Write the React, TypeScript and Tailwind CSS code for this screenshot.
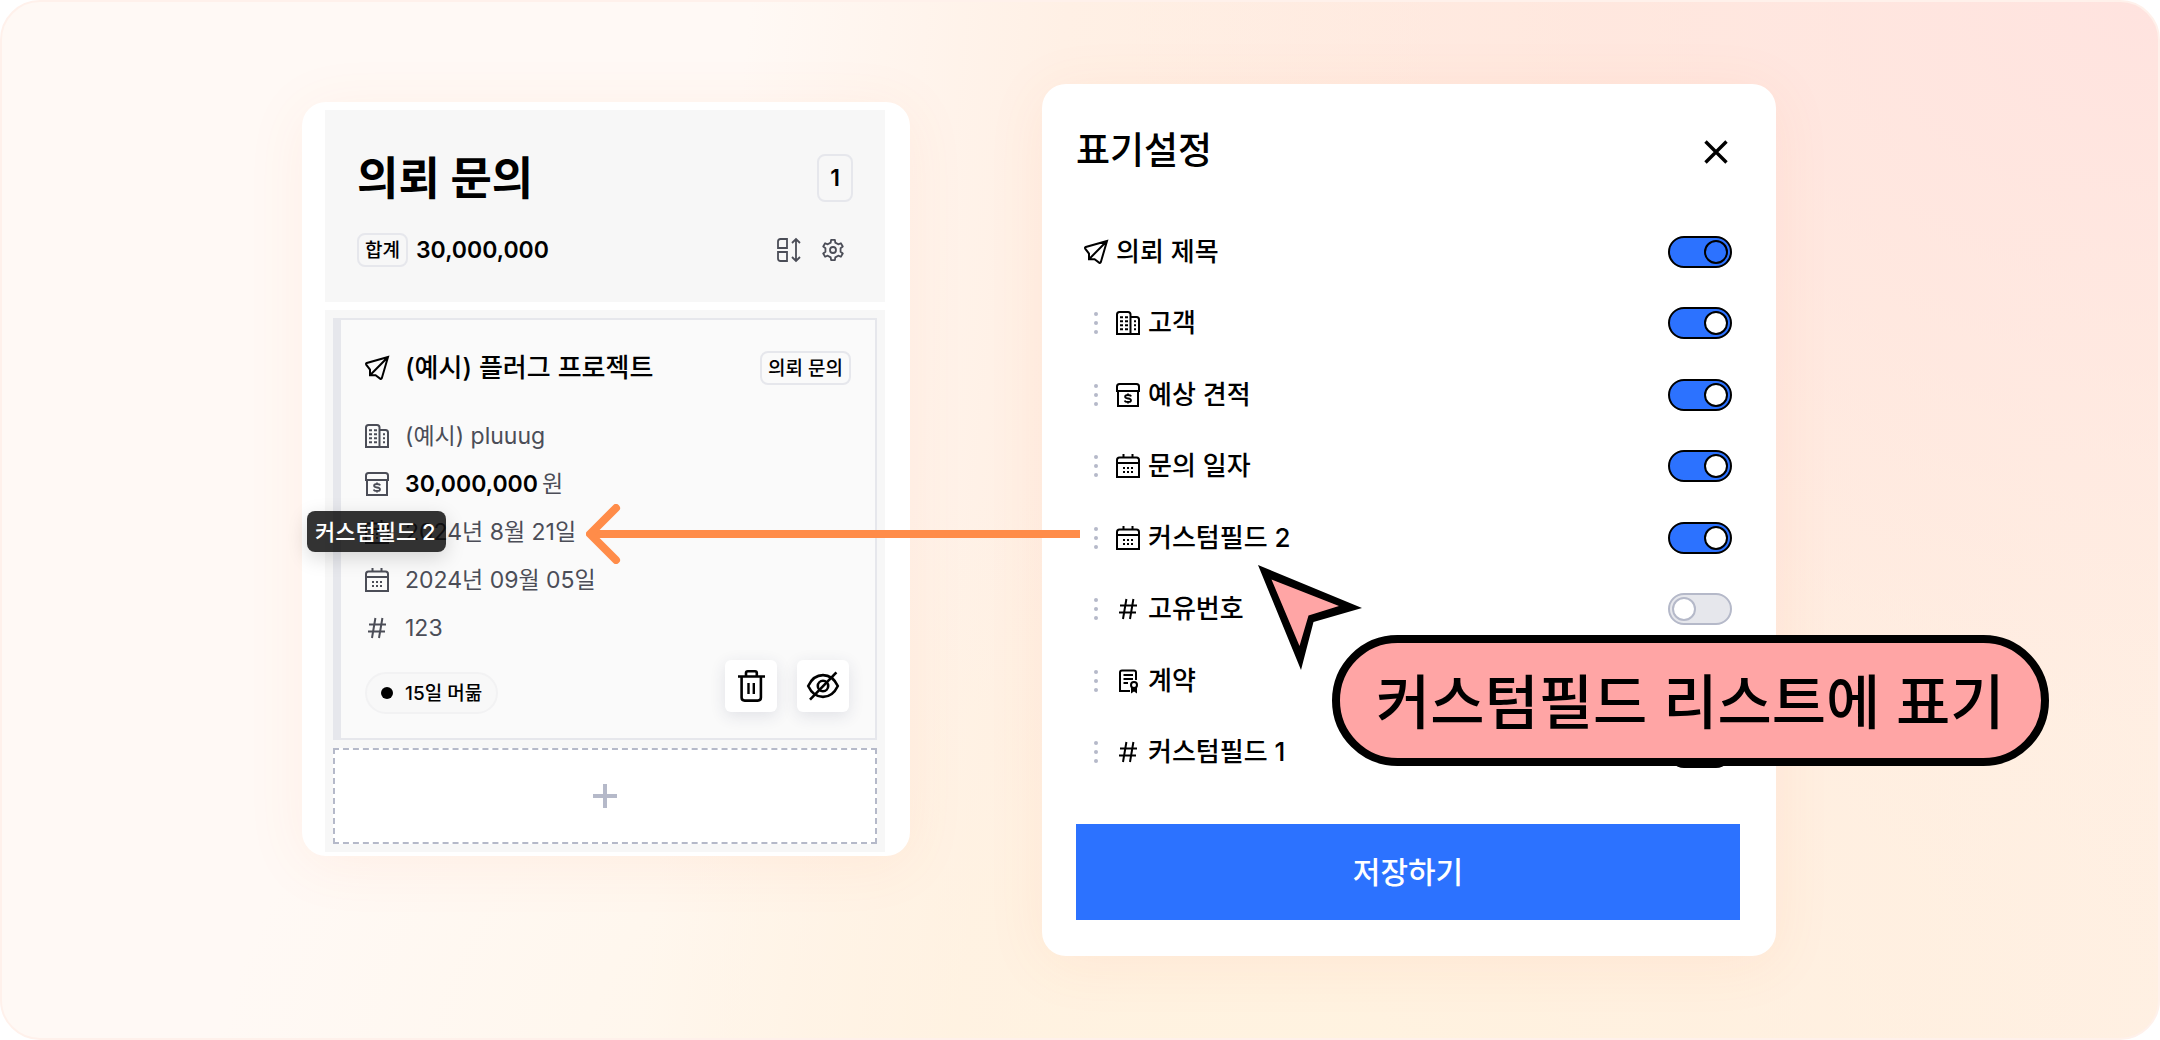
import type { ReactNode } from 'react';

type IconProps = { className?: string };

function Icon({ children, size = 24, className = 'size-6' }: { children: ReactNode; size?: number; className?: string }) {
  return (
    <svg
      aria-hidden="true"
      viewBox={`0 0 ${size} ${size}`}
      fill="none"
      stroke="currentColor"
      strokeWidth="2"
      className={`${className} shrink-0 overflow-visible`}
    >
      {children}
    </svg>
  );
}

function PlaneIcon({ className }: IconProps) {
  return (
    <Icon className={className}>
      <path d="M23 1 1.8 7Q.6 7.5 1.2 8.6L5 13.6V19.2H10.6L15.4 22.8Q16.3 23.3 16.8 22.2Z M23 1 5 19.2" />
    </Icon>
  );
}

function BuildingIcon({ className }: IconProps) {
  return (
    <Icon className={className}>
      <path d="M1 23V3.5Q1 1 3.5 1H12Q14.5 1 14.5 3.5V23M14.5 6H20.5Q23 6 23 8.5V23M0 23H24" />
      <path d="M4 6.2h3M9 6.2h3M4 10.2h3M9 10.2h3M4 14.2h3M9 14.2h3M4 18.2h3M9 18.2h3M18 10.2h2M18 14.2h2M18 18.2h2" />
    </Icon>
  );
}

function BudgetIcon({ className }: IconProps) {
  return (
    <Icon className={className}>
      <path d="M1 8V3.5Q1 1 3.5 1H20.5Q23 1 23 3.5V8ZM2 8V23H22V8" />
      <path
        d="M15.2 13.4Q14.6 12 12 12 9.1 12 9.1 13.8 9.1 15.2 12 15.5 15 15.8 15 17.4 15 19 12 19 9.2 19 8.7 17.4M12 10.4V12M12 19V20.6"
        strokeWidth="1.8"
      />
    </Icon>
  );
}

function CalendarIcon({ className }: IconProps) {
  return (
    <Icon className={className}>
      <path d="M1 23V6Q1 3.5 3.5 3.5H20.5Q23 3.5 23 6V23ZM1 9H23M7.5 0V4M16.5 0V4" />
      <path d="M7 14h2M11 14h2M15 14h2M7 18h2M11 18h2M15 18h2" />
    </Icon>
  );
}

function HashIcon({ className }: IconProps) {
  return (
    <Icon className={className}>
      <path d="M4 8.5H21M3 15.5H20M10.4 2 7 22M17.4 2 14 22" />
    </Icon>
  );
}

function ContractIcon({ className }: IconProps) {
  return (
    <Icon className={className}>
      <path d="M14 22H4V3.5Q4 1.5 6 1.5H18Q20 1.5 20 3.5V11M7.5 6H17M7.5 10H17M7.5 14H12" />
      <circle cx="18" cy="16" r="3" />
      <path d="M15 18.5H21V24.5L18 22.5 15 24.5Z" fill="currentColor" stroke="none" />
    </Icon>
  );
}

function SortIcon() {
  return (
    <Icon>
      <path d="M1 10V3.5Q1 1 3.5 1H10V10ZM1 14H10V23H3.5Q1 23 1 20.5Z" strokeWidth="1.8" />
      <path d="M19 1V23M15 5 19 1 23 5M15 19 19 23 23 19" strokeWidth="1.8" />
    </Icon>
  );
}

const gearPath =
  [0, 60, 120, 180, 240, 300]
    .map((deg, index) => {
      const turn = (deg * Math.PI) / 180;
      const corners = [
        [-2.3, -7.4],
        [-1.9, -10.2],
        [1.9, -10.2],
        [2.3, -7.4],
      ];
      return corners
        .map(([x, y], corner) => {
          const px = 12 + x * Math.cos(turn) - y * Math.sin(turn);
          const py = 12 + x * Math.sin(turn) + y * Math.cos(turn);
          return `${index + corner === 0 ? 'M' : 'L'}${px.toFixed(2)} ${py.toFixed(2)}`;
        })
        .join('');
    })
    .join('') + 'Z';

function GearIcon() {
  return (
    <Icon>
      <path d={gearPath} strokeWidth="1.8" strokeLinejoin="round" />
      <circle cx="12" cy="12" r="3" strokeWidth="1.8" />
    </Icon>
  );
}

function TrashIcon() {
  return (
    <Icon size={32} className="size-8">
      <path d="M3 6.5H30M11 6.5V3Q11 1.2 12.8 1.2H20Q21.8 1.2 21.8 3V6.5M6.6 6.5V27.5Q6.6 30.6 9.7 30.6H22.8Q25.9 30.6 25.9 27.5V6.5" strokeWidth="2.6" />
      <path d="M13.5 13V24M18.8 13V24" strokeWidth="2.4" />
    </Icon>
  );
}

function HiddenIcon() {
  return (
    <Icon size={32} className="size-8">
      <path d="M1.2 16C8 1.5 24 1.5 30.8 16 24 30.5 8 30.5 1.2 16Z" strokeWidth="2.6" />
      <circle cx="16" cy="16" r="5.2" strokeWidth="2.6" />
      <path d="M3 29.6 29.4 2.4" strokeWidth="2.6" />
    </Icon>
  );
}

function Badge({ children }: { children: ReactNode }) {
  return (
    <span className="flex h-[34px] items-center rounded-lg border-2 border-[#e6e7ec] px-1.5 text-[19px] leading-none font-medium text-black">
      {children}
    </span>
  );
}

function CardRow({ icon, children }: { icon: ReactNode; children: ReactNode }) {
  return (
    <li className="relative flex h-12 items-center gap-4 text-[23px] leading-8 font-normal text-[#4b4d57]">
      {icon}
      {children}
    </li>
  );
}

function BoardColumn() {
  return (
    <section className="mt-[18px] rounded-[24px] bg-white pt-2 pr-[25px] pb-1 pl-[23px] shadow-[0_8px_60px_rgba(255,110,70,0.08)]">
      <header className="bg-[#f7f7f7] px-8 pt-11 pb-[35px]">
        <div className="flex h-12 items-center justify-between">
          <h1 className="text-[45px] leading-none font-bold">의뢰 문의</h1>
          <span className="flex h-12 w-9 items-center justify-center rounded-lg border-2 border-[#e6e7ec] text-[23px] font-semibold">1</span>
        </div>
        <div className="mt-[31px] flex items-center">
          <Badge>합계</Badge>
          <strong className="ml-2 text-[23px] leading-8 font-semibold">30,000,000</strong>
          <div className="ml-auto flex gap-5 pr-2 text-[#4b4d57]">
            <button type="button" aria-label="정렬">
              <SortIcon />
            </button>
            <button type="button" aria-label="설정">
              <GearIcon />
            </button>
          </div>
        </div>
      </header>

      <div className="mt-2 bg-[#f7f7f7] p-2">
        <article className="border-2 border-l-8 border-[#e6e7ec] bg-[#fafafa] px-6 pt-[31px] pb-6">
          <div className="flex h-[34px] items-center">
            <PlaneIcon />
            <h2 className="ml-4 text-[26px] leading-8 font-medium">(예시) 플러그 프로젝트</h2>
            <div className="ml-auto">
              <Badge>의뢰 문의</Badge>
            </div>
          </div>
          <ul className="mt-[27px]">
            <CardRow icon={<BuildingIcon />}>(예시) pluuug</CardRow>
            <CardRow icon={<BudgetIcon />}>
              <span>
                <strong className="mr-1 font-semibold text-black">30,000,000</strong>원
              </span>
            </CardRow>
            <CardRow icon={<CalendarIcon />}>
              2024년 8월 21일
              <span
                role="tooltip"
                className="absolute top-[3px] -left-[58px] flex h-[41px] items-center rounded-lg bg-black/80 pr-2.5 pl-2 text-[22px] leading-none font-medium whitespace-nowrap text-white shadow-[0_6px_20px_rgba(0,0,0,0.15)]"
              >
                커스텀필드 2
              </span>
            </CardRow>
            <CardRow icon={<CalendarIcon />}>2024년 09월 05일</CardRow>
            <CardRow icon={<HashIcon />}>123</CardRow>
          </ul>
          <div className="mt-2 flex items-end justify-between">
            <span className="flex h-[42px] items-center gap-3 rounded-full border-2 border-[#f2f2f3] bg-[#f8f8f8] px-3.5 text-[19px] leading-none font-medium">
              <span className="size-3 rounded-full bg-black" />
              15일 머묾
            </span>
            <div className="mr-0.5 mb-0.5 flex gap-5">
              <button
                type="button"
                aria-label="삭제"
                className="flex size-[52px] items-center justify-center rounded-md bg-white shadow-[0_4px_16px_rgba(40,50,90,0.12)]"
              >
                <TrashIcon />
              </button>
              <button
                type="button"
                aria-label="숨기기"
                className="flex size-[52px] items-center justify-center rounded-md bg-white shadow-[0_4px_16px_rgba(40,50,90,0.12)]"
              >
                <HiddenIcon />
              </button>
            </div>
          </div>
        </article>
        <button
          type="button"
          aria-label="추가"
          className="mt-2 flex h-24 w-full items-center justify-center border-2 border-dashed border-[#b5b9c9] bg-white text-[#b5b9c9]"
        >
          <Icon>
            <path d="M12 0V24M0 12H24" strokeWidth="4" />
          </Icon>
        </button>
      </div>
    </section>
  );
}

type Field = { id: string; label: string; icon: ReactNode; on: boolean; locked?: boolean };

const fields: Field[] = [
  { id: 'title', label: '의뢰 제목', icon: <PlaneIcon />, on: true, locked: true },
  { id: 'client', label: '고객', icon: <BuildingIcon />, on: true },
  { id: 'estimate', label: '예상 견적', icon: <BudgetIcon />, on: true },
  { id: 'inquiry-date', label: '문의 일자', icon: <CalendarIcon />, on: true },
  { id: 'custom-2', label: '커스텀필드 2', icon: <CalendarIcon />, on: true },
  { id: 'number', label: '고유번호', icon: <HashIcon />, on: false },
  { id: 'contract', label: '계약', icon: <ContractIcon />, on: true },
  { id: 'custom-1', label: '커스텀필드 1', icon: <HashIcon />, on: true },
];

function FieldRow({ field }: { field: Field }) {
  return (
    <li className="flex items-center pr-2 pl-2">
      {!field.locked && (
        <span className="mr-[18px] ml-2.5 flex flex-col gap-[5px]">
          <span className="size-1 rounded-full bg-[#b5b9c9]" />
          <span className="size-1 rounded-full bg-[#b5b9c9]" />
          <span className="size-1 rounded-full bg-[#b5b9c9]" />
        </span>
      )}
      {field.icon}
      <label htmlFor={field.id} className="ml-2 text-[26px] leading-8 font-medium">
        {field.label}
      </label>
      <input
        id={field.id}
        type="checkbox"
        role="switch"
        defaultChecked={field.on}
        disabled={field.locked}
        className="ml-auto flex h-8 w-16 appearance-none items-center rounded-full border-2 border-[#b5b9c9] bg-[#e6e7ec] px-0.5 before:size-6 before:rounded-full before:border-2 before:border-[#b5b9c9] before:bg-white before:content-[''] checked:justify-end checked:border-black checked:bg-[#2c72ff] checked:before:border-black disabled:before:bg-[#2c72ff]"
      />
    </li>
  );
}

function DisplaySettings() {
  return (
    <section className="relative rounded-[24px] bg-white pt-10 pr-9 pb-9 pl-[34px] shadow-[0_8px_60px_rgba(255,120,60,0.08)]">
      <header className="flex h-[52px] items-center justify-between pr-3">
        <h2 className="text-[37px] leading-none font-medium">표기설정</h2>
        <button type="button" aria-label="닫기" className="pt-1">
          <Icon>
            <path d="M1.5 1.5 22.5 22.5M22.5 1.5 1.5 22.5" strokeWidth="3.4" />
          </Icon>
        </button>
      </header>
      <ul className="mt-10 grid h-[572px] auto-rows-fr">
        {fields.map((field) => (
          <FieldRow key={field.id} field={field} />
        ))}
      </ul>
      <button type="button" className="mt-9 h-24 w-full bg-[#2c72ff] text-[30px] font-medium text-white">
        저장하기
      </button>

      <svg aria-hidden="true" viewBox="0 0 104 106" className="absolute top-[481px] left-[216px] h-[106px] w-[104px]">
        <path d="M0 0 104 43 55.5 57 43 105Z" fill="#000" />
        <path d="M13.5 14.5 81 41 50.5 50.5 41.5 81Z" fill="#ffa5a5" />
      </svg>
      <p className="absolute top-[551px] left-[290px] flex h-[131px] items-center rounded-full border-8 border-black bg-[#ffa5a5] px-9 pt-1 text-[59px] leading-none font-medium whitespace-nowrap">
        커스텀필드 리스트에 표기
      </p>
    </section>
  );
}

export default function App() {
  return (
    <main className="min-h-screen bg-white font-['Inter','Noto_Sans_CJK_KR',sans-serif] text-black">
      <div className="min-h-screen rounded-[40px] border-2 border-[#fff1eb] bg-[#fff9f5] bg-[radial-gradient(ellipse_48%_70%_at_100%_0%,#ffe3df_0%,#ffe3df00_100%),radial-gradient(ellipse_50%_60%_at_60%_105%,#fff3e0_0%,#fff3e000_100%),linear-gradient(96deg,#fff9f5_33%,#fff0e5_47%,#ffebde_70%,#ffefe3_100%)] px-4 pt-[82px] pb-20">
        <div className="mx-auto max-w-[1556px] pr-[82px]">
          <div className="relative grid grid-cols-[608fr_734fr] items-start gap-[132px]">
            <BoardColumn />
            <DisplaySettings />
            <svg aria-hidden="true" viewBox="0 0 494 60" className="absolute top-[420px] left-[284px] h-[60px] w-[494px]">
              <path d="M494 30H6" fill="none" stroke="#ff8c49" strokeWidth="8" />
              <path d="M30 4 4 30 30 56" fill="none" stroke="#ff8c49" strokeWidth="8" strokeLinecap="round" strokeLinejoin="round" />
            </svg>
          </div>
        </div>
      </div>
    </main>
  );
}
